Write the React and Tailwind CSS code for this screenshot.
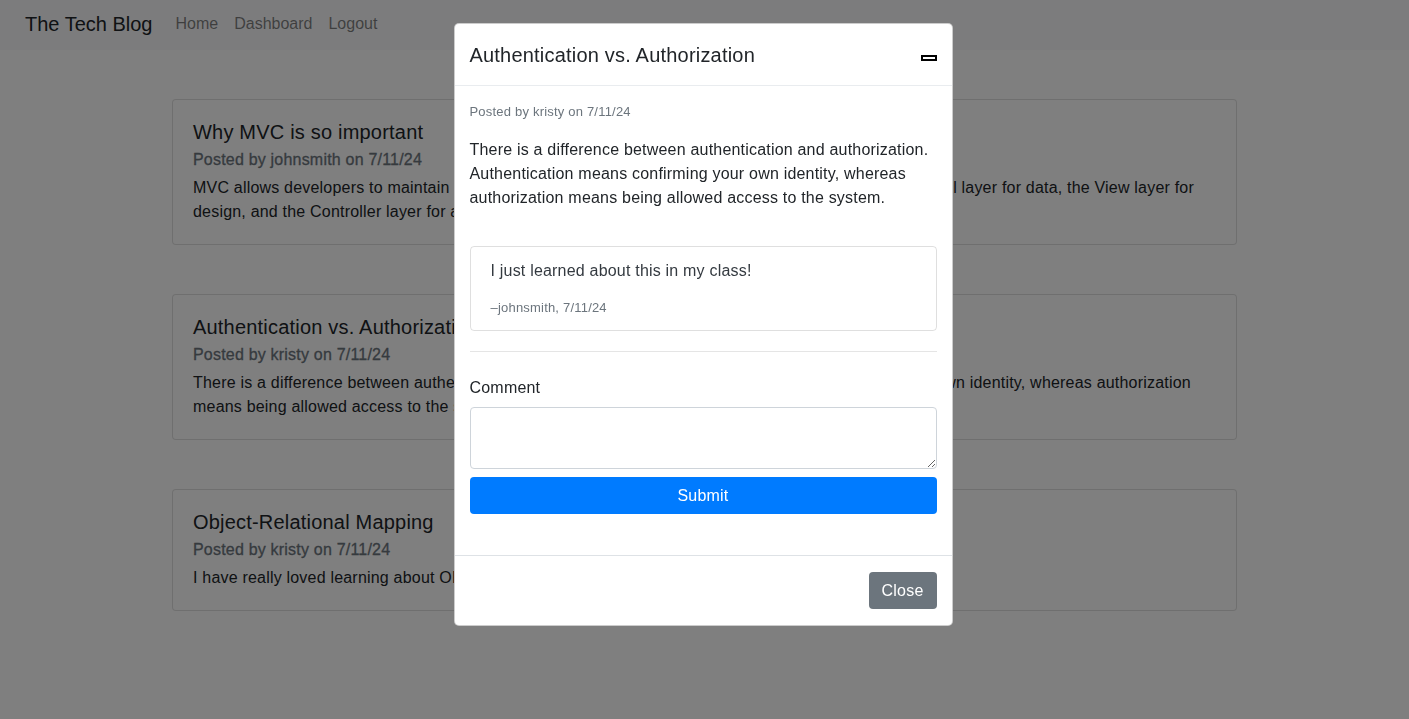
import React from 'react';

const font = { fontFamily: '"Liberation Sans", Arial, sans-serif' };

const posts = [
    {
        title: 'Why MVC is so important',
        author: 'johnsmith',
        date: '7/11/24',
        body: 'MVC allows developers to maintain a true separation of concerns, devising their code between the Model layer for data, the View layer for design, and the Controller layer for application logic.',
    },
    {
        title: 'Authentication vs. Authorization',
        author: 'kristy',
        date: '7/11/24',
        body: 'There is a difference between authentication and authorization. Authentication means confirming your own identity, whereas authorization means being allowed access to the system.',
    },
    {
        title: 'Object-Relational Mapping',
        author: 'kristy',
        date: '7/11/24',
        body: "I have really loved learning about ORMs. It's really simplified the way I create queries in SQL!",
    },
];

const PostCard = ({ post }) => (
    <div className="border border-black/[0.125] rounded-[4px] bg-white px-5 pt-5 pb-5">
        <h5 className="text-[20px] leading-[24px] text-[#212529] mb-[6px]">{post.title}</h5>
        <h6 className="text-[16px] leading-[19px] text-[#6c757d] mb-[7px] [-webkit-text-stroke:0.3px_#6c757d]">
            Posted by {post.author} on {post.date}
        </h6>
        <p className="text-[16px] leading-[24px] text-[#212529]">{post.body}</p>
    </div>
);

const App = () => {
    return (
        <div className="min-h-screen bg-white tracking-[0.2px]" style={font}>
            <nav className="h-[50px] bg-[#f8f9fa] flex items-center pl-[25px] pb-[2px]">
                <span className="text-[20px] text-[#212529] mr-[23px] tracking-normal">The Tech Blog</span>
                <div className="flex gap-[16px] text-[16px] text-black/50 tracking-normal">
                    <span>Home</span>
                    <span>Dashboard</span>
                    <span>Logout</span>
                </div>
            </nav>

            <main className="w-[1065px] mx-auto pt-[49px] flex flex-col gap-[49px]">
                {posts.map((p) => (
                    <PostCard key={p.title} post={p} />
                ))}
            </main>

            {/* backdrop */}
            <div className="fixed inset-0 bg-black/50" />

            {/* modal */}
            <div className="fixed inset-0 flex justify-center pt-[23px] pr-[3px]">
                <div className="w-[499px] h-fit bg-white border border-black/20 rounded-[5px] text-[#212529]">
                    <div className="flex items-start justify-between px-[15px] pt-[16px] pb-[15px] border-b border-[#e9ecef]">
                        <h5 className="text-[20px] leading-[30px]">Authentication vs. Authorization</h5>
                        <button className="mt-[15px] w-[16px] h-[6px] border-2 border-black bg-white" />
                    </div>

                    <div className="px-[15px] pt-[16px] pb-[41px]">
                        <p className="text-[13px] leading-[19px] text-[#6c757d] mb-[17px]">Posted by kristy on 7/11/24</p>
                        <p className="text-[16px] leading-[24px] mb-[36px]">
                            There is a difference between authentication and authorization. Authentication means confirming your own identity, whereas authorization means being allowed access to the system.
                        </p>

                        <div className="border border-black/[0.125] rounded-[4px] px-5 pt-[12px] pb-[12px]">
                            <p className="text-[16px] leading-[24px] text-[#343a40]">I just learned about this in my class!</p>
                            <p className="text-[13px] leading-[20px] text-[#6c757d] mt-[15px]">–johnsmith, 7/11/24</p>
                        </div>

                        <hr className="mt-[20px] mb-[24px] border-t border-black/10" />

                        <form className="flex flex-col" onSubmit={(e) => e.preventDefault()}>
                            <label className="text-[16px] leading-[24px] mb-[7px]">Comment</label>
                            <textarea className="h-[62px] border border-[#ced4da] rounded-[4px] px-3 py-1.5 resize-y" />
                            <button className="mt-[8px] h-[37px] bg-[#007bff] text-white text-[16px] rounded-[4px]">Submit</button>
                        </form>
                    </div>

                    <div className="flex justify-end px-[15px] py-[16px] border-t border-[#dee2e6]">
                        <button className="h-[37px] px-[13px] bg-[#6c757d] text-white text-[16px] rounded-[4px]">Close</button>
                    </div>
                </div>
            </div>
        </div>
    );
};

export default App;
